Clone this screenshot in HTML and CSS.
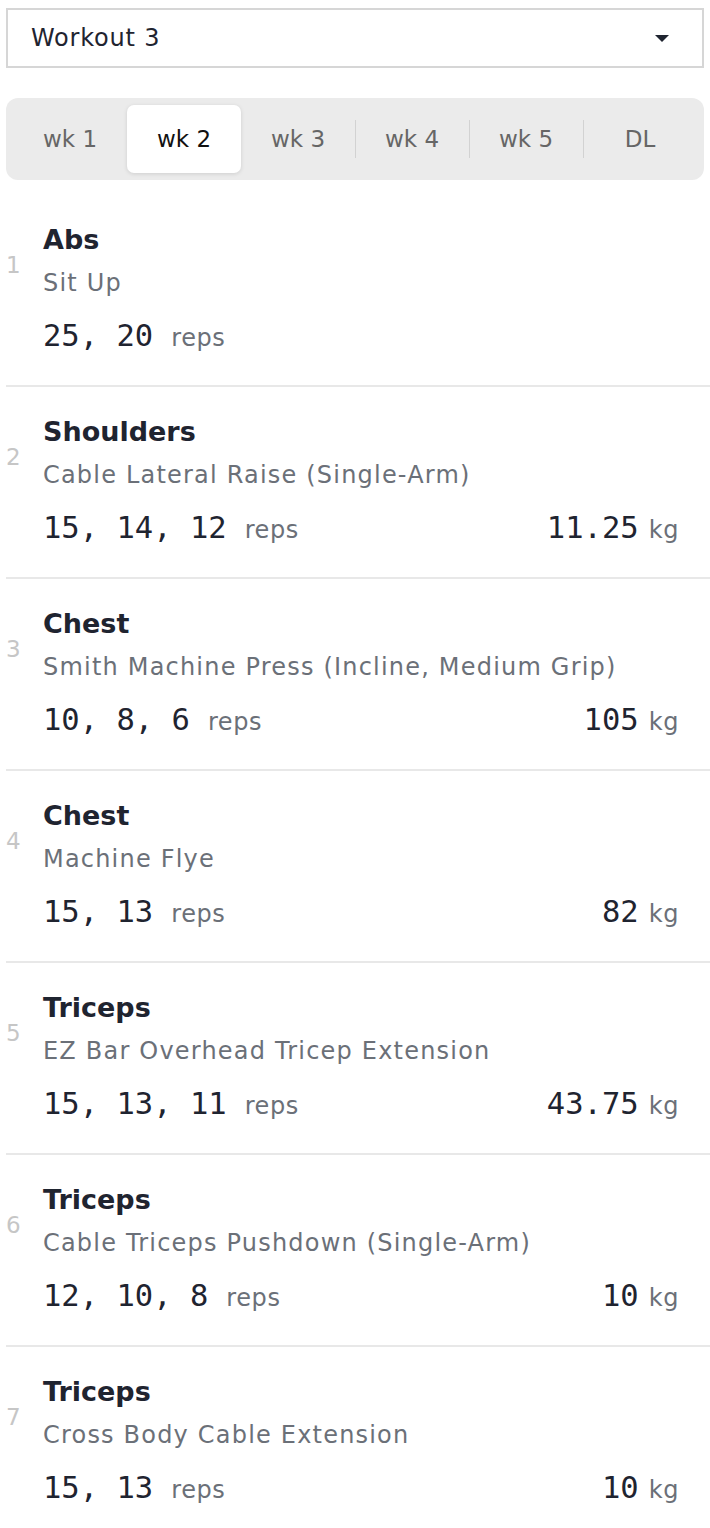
FILE: index.html
```html
<!DOCTYPE html>
<html>
<head>
<meta charset="utf-8">
<link rel="stylesheet" href="styles.css">
</head>
<body>
<div class="page">
  <div class="select">
    <span class="select-label">Workout 3</span>
    <svg class="caret" width="14" height="8" viewBox="0 0 14 8"><path d="M0 0 H14 L7 7 Z" fill="#1f2430"/></svg>
  </div>

  <div class="tabs">
    <div class="tab">wk 1</div>
    <div class="tab active">wk 2</div>
    <div class="tab">wk 3</div>
    <div class="tab sep">wk 4</div>
    <div class="tab sep">wk 5</div>
    <div class="tab sep">DL</div>
  </div>

  <div class="list">
    <div class="item">
      <div class="num">1</div>
      <div class="title">Abs</div>
      <div class="sub">Sit Up</div>
      <div class="row"><span><span class="mono">25, 20</span><span class="unit">reps</span></span></div>
    </div>
    <div class="item">
      <div class="num">2</div>
      <div class="title">Shoulders</div>
      <div class="sub">Cable Lateral Raise (Single-Arm)</div>
      <div class="row"><span><span class="mono">15, 14, 12</span><span class="unit">reps</span></span><span><span class="mono">11.25</span><span class="unit kg">kg</span></span></div>
    </div>
    <div class="item">
      <div class="num">3</div>
      <div class="title">Chest</div>
      <div class="sub">Smith Machine Press (Incline, Medium Grip)</div>
      <div class="row"><span><span class="mono">10, 8, 6</span><span class="unit">reps</span></span><span><span class="mono">105</span><span class="unit kg">kg</span></span></div>
    </div>
    <div class="item">
      <div class="num">4</div>
      <div class="title">Chest</div>
      <div class="sub">Machine Flye</div>
      <div class="row"><span><span class="mono">15, 13</span><span class="unit">reps</span></span><span><span class="mono">82</span><span class="unit kg">kg</span></span></div>
    </div>
    <div class="item">
      <div class="num">5</div>
      <div class="title">Triceps</div>
      <div class="sub">EZ Bar Overhead Tricep Extension</div>
      <div class="row"><span><span class="mono">15, 13, 11</span><span class="unit">reps</span></span><span><span class="mono">43.75</span><span class="unit kg">kg</span></span></div>
    </div>
    <div class="item">
      <div class="num">6</div>
      <div class="title">Triceps</div>
      <div class="sub">Cable Triceps Pushdown (Single-Arm)</div>
      <div class="row"><span><span class="mono">12, 10, 8</span><span class="unit">reps</span></span><span><span class="mono">10</span><span class="unit kg">kg</span></span></div>
    </div>
    <div class="item last">
      <div class="num">7</div>
      <div class="title">Triceps</div>
      <div class="sub">Cross Body Cable Extension</div>
      <div class="row"><span><span class="mono">15, 13</span><span class="unit">reps</span></span><span><span class="mono">10</span><span class="unit kg">kg</span></span></div>
    </div>
  </div>
</div>
</body>
</html>
```

FILE: styles.css
```css
* { box-sizing: border-box; }
html, body { margin: 0; padding: 0; background: #fff; }
body {
  font-family: "DejaVu Sans", "Noto Sans", sans-serif;
  color: #1f2430;
}
.page { padding: 8px 0 0 6px; }

.select {
  width: 698px;
  height: 60px;
  border: 2px solid #d6d6d6;
  display: flex;
  align-items: center;
  justify-content: space-between;
  padding: 0 33px 0 23px;
}
.select-label { font-size: 24px; letter-spacing: 0.8px; color: #1f2430; }
.caret { margin-top: 2px; }

.tabs {
  margin-top: 30px;
  width: 698px;
  height: 82px;
  background: #ebebeb;
  border-radius: 12px;
  padding: 7px;
  display: grid;
  grid-template-columns: repeat(6, 1fr);
}
.tab {
  position: relative;
  display: flex;
  align-items: center;
  justify-content: center;
  font-size: 23px;
  color: #666;
  border-radius: 7px;
}
.tab.active {
  background: #fff;
  color: #111;
  box-shadow: 0 1px 4px rgba(0,0,0,0.12);
}
.tab.sep::before {
  content: "";
  position: absolute;
  left: 0;
  top: 15px;
  bottom: 15px;
  width: 1px;
  background: #d2d2d2;
}

.list { margin-top: 15px; }
.item {
  display: grid;
  grid-template-columns: 37px 1fr;
  border-bottom: 2px solid #e8e8e8;
  padding: 28px 31px 29px 0;
}
.item.last { border-bottom: none; }
.num {
  grid-column: 1;
  grid-row: 1 / span 2;
  align-self: center;
  font-size: 23px;
  color: #c6c6c6;
  padding-top: 6px;
}
.title {
  grid-column: 2;
  font-size: 27px;
  font-weight: 700;
  line-height: 34px;
  color: #1f2430;
}
.sub {
  grid-column: 2;
  font-size: 24px;
  letter-spacing: 1.2px;
  line-height: 34px;
  margin-top: 9px;
  color: #6b7078;
}
.row {
  grid-column: 2;
  margin-top: 16px;
  height: 40px;
  line-height: 40px;
  display: flex;
  justify-content: space-between;
  align-items: baseline;
}
.mono {
  font-family: "DejaVu Sans Mono", "Liberation Mono", monospace;
  font-size: 30.5px;
  color: #1f2430;
}
.unit {
  font-size: 24px;
  letter-spacing: 0.6px;
  color: #6b7078;
  margin-left: 18px;
}
.unit.kg { margin-left: 10px; }
```
